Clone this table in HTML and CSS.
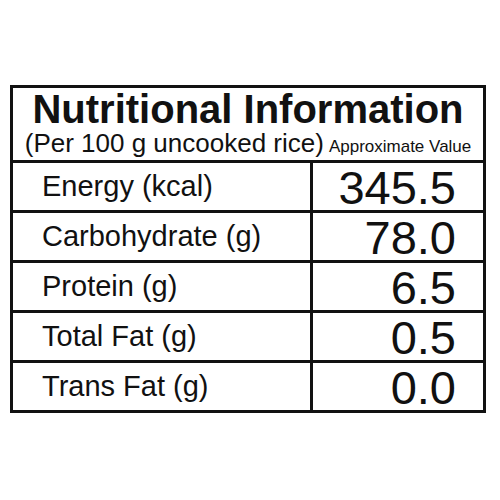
FILE: index.html
```html
<!DOCTYPE html>
<html>
<head>
    <meta charset="UTF-8">
    <meta name="viewport" content="width=device-width, initial-scale=1.0">
    <link rel="stylesheet" href="styles.css">
</head>
<body>
    <div class="panel">
        <div class="header">
            <h1 class="title">Nutritional Information</h1>
            <div class="subtitle">
                <span class="basis">(Per 100 g uncooked rice)</span>
                <span class="approx">Approximate Value</span>
            </div>
        </div>
        <div class="row">
            <div class="name">Energy (kcal)</div>
            <div class="value">345.5</div>
        </div>
        <div class="row">
            <div class="name">Carbohydrate (g)</div>
            <div class="value">78.0</div>
        </div>
        <div class="row">
            <div class="name">Protein (g)</div>
            <div class="value">6.5</div>
        </div>
        <div class="row">
            <div class="name">Total Fat (g)</div>
            <div class="value">0.5</div>
        </div>
        <div class="row last">
            <div class="name">Trans Fat (g)</div>
            <div class="value">0.0</div>
        </div>
    </div>
</body>
</html>
```

FILE: styles.css
```css
* {
    box-sizing: border-box;
}

body {
    margin: 0;
    padding-top: 85px;
    background-color: #fff;
    color: #111;
    font-family: "Liberation Sans", Arial, sans-serif;
}

.panel {
    width: 476px;
    margin-left: 10px;
    border: 3px solid #111;
}

.header {
    height: 75px;
    border-bottom: 3px solid #111;
    display: flex;
    flex-direction: column;
    align-items: center;
}

.title {
    margin: 0;
    font-size: 40px;
    font-weight: bold;
    line-height: 40px;
    padding-top: 1px;
}

.subtitle {
    display: flex;
    align-items: baseline;
    gap: 5px;
    line-height: 28px;
}

.basis {
    font-size: 26px;
}

.approx {
    font-size: 17px;
}

.row {
    display: grid;
    grid-template-columns: 300px 1fr;
    height: 50px;
    border-bottom: 3px solid #111;
}

.row.last {
    border-bottom: none;
    height: 47px;
}

.name {
    border-right: 3px solid #111;
    padding-left: 29px;
    font-size: 29px;
    line-height: 47px;
}

.value {
    text-align: right;
    padding-right: 27px;
    font-size: 47px;
    line-height: 49px;
}
```
